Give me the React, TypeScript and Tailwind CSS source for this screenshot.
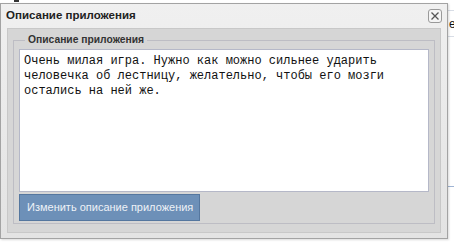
import React from "react";

const sans = { fontFamily: '"Liberation Sans", Arial, sans-serif' };
const mono = { fontFamily: '"Liberation Mono", "Courier New", monospace' };

const CloseIcon = () => (
    <div className="flex h-[14px] w-[14px] items-center justify-center rounded-[3px] border border-[#9a9a9a] bg-[#f4f4f4]">
        <svg width="10" height="10" viewBox="0 0 10 10">
            <path d="M1.5 1.5 L8.5 8.5 M8.5 1.5 L1.5 8.5" stroke="#555" strokeWidth="1.3" />
        </svg>
    </div>
);

export default function App() {
    return (
        <div className="relative h-[242px] w-[454px] overflow-hidden bg-white" style={sans}>
            {/* page behind the window */}
            <div className="absolute left-[14px] top-0 h-[2px] w-[5px] bg-[#333]" />
            <div className="absolute left-[447px] top-[10px] h-px w-[7px] bg-[#d8dde6]" />
            <div className="absolute left-[449px] top-[18px] text-[12px] leading-none text-[#111]">e</div>
            <div className="absolute left-[447px] top-[36px] h-px w-[7px] bg-[#d8dde6]" />
            <div className="absolute left-[447px] top-[186px] h-px w-[7px] bg-[#9fb4d4]" />

            {/* window */}
            <div className="absolute left-0 top-[3px] flex h-[236px] w-[448px] flex-col border border-[#a3a3a3] bg-gradient-to-b from-[#f0f0f0] to-[#e3e3e3] shadow-[1px_1px_2px_rgba(0,0,0,0.15)]">
                <div className="flex h-[24px] items-center justify-between pl-[5px] pr-[5px]">
                    <span className="text-[11.5px] font-bold text-[#222]">Описание приложения</span>
                    <CloseIcon />
                </div>
                <div className="mx-[6px] flex flex-1 flex-col border border-[#c8c8c8] bg-[#d6d6d6] px-[5px] pb-[8px] pt-[5px]">
                    <fieldset className="flex flex-1 flex-col border border-[#bdbdc4] px-[5px] pb-[1px]">
                        <legend className="ml-[6px] px-[3px] text-[10.3px] font-bold leading-[12px] text-[#333]">
                            Описание приложения
                        </legend>
                        <div
                            className="mt-[3px] h-[143px] border border-[#b5b8c8] bg-white px-[4px] pt-[4px] text-[12px] leading-[15px] text-[#111]"
                            style={mono}
                        >
                            Очень милая игра. Нужно как можно сильнее ударить человечка об лестницу, желательно, чтобы его мозги остались на ней же.
                        </div>
                        <div className="mt-[2px] flex">
                            <button className="h-[27px] w-[181px] whitespace-nowrap border border-[#55779f] bg-[#6d90b8] pl-[7px] text-left text-[11px] text-[#eef2f7]">
                                Изменить описание приложения
                            </button>
                        </div>
                    </fieldset>
                </div>
                <div className="h-[5px]" />
            </div>
        </div>
    );
}
